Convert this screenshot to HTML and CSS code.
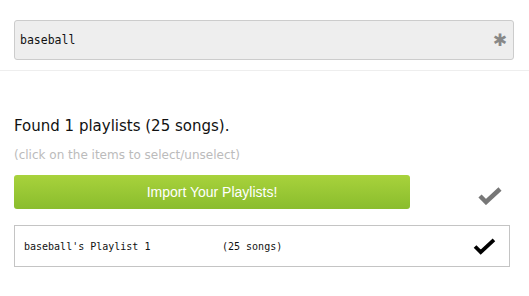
FILE: index.html
```html
<!DOCTYPE html>
<html lang="en">

<head>
  <meta charset="UTF-8" />
  <meta name="viewport" content="width=device-width, initial-scale=1.0" />
  <title>Playlist import</title>
  <link rel="stylesheet" href="styles.css">
</head>

<body>
  <div class="search-bar">
    <div class="search-field">
      <span class="search-text">baseball</span>
      <span class="search-clear">&#x2731;</span>
    </div>
  </div>

  <div class="results">
    <p class="found">Found 1 playlists (25 songs).</p>
    <p class="hint">(click on the items to select/unselect)</p>

    <div class="import-row">
      <button class="btn-import">Import Your Playlists!</button>
      <svg class="check check-all" viewBox="0 0 24 18">
        <path d="M2 9l6 6L22 2" fill="none" stroke="currentColor" stroke-width="4.5"></path>
      </svg>
    </div>

    <div class="playlist">
      <span class="playlist-name">baseball's Playlist 1</span>
      <span class="playlist-count">(25 songs)</span>
      <svg class="check check-item" viewBox="0 0 24 18">
        <path d="M2 9l6 6L22 2" fill="none" stroke="currentColor" stroke-width="4"></path>
      </svg>
    </div>
  </div>
</body>

</html>
```

FILE: styles.css
```css
* {
  box-sizing: border-box;
  margin: 0;
  padding: 0;
}

body {
  font-family: "DejaVu Sans", Verdana, sans-serif;
  background: #ffffff;
  color: #111111;
  width: 529px;
}

.search-bar {
  padding: 20px 15px 10px 14px;
  border-bottom: 1px solid #eeeeee;
}

.search-field {
  display: flex;
  align-items: center;
  justify-content: space-between;
  height: 40px;
  padding: 0 6px 0 5px;
  background: #eeeeee;
  border: 1px solid #cccccc;
  border-radius: 3px;
}

.search-text {
  font-family: "DejaVu Sans Mono", monospace;
  font-size: 11.5px;
  color: #111111;
}

.search-clear {
  font-family: "DejaVu Sans", sans-serif;
  font-size: 17px;
  font-weight: bold;
  color: #888888;
}

.results {
  padding: 46px 20px 0 14px;
}

.found {
  font-size: 15px;
  line-height: 18px;
}

.hint {
  margin-top: 13px;
  font-size: 12px;
  line-height: 15px;
  color: #bbbbbb;
}

.import-row {
  display: flex;
  align-items: center;
  margin-top: 12px;
}

.btn-import {
  width: 396px;
  height: 34px;
  border: none;
  border-radius: 3px;
  background: linear-gradient(#a8d23c, #8abd2d);
  color: #ffffff;
  font-family: "Liberation Sans", Arial, sans-serif;
  font-size: 14px;
  cursor: pointer;
}

.check {
  display: block;
  margin-left: auto;
  margin-right: 7px;
}

.check-all {
  width: 24px;
  height: 18px;
  color: #777777;
  margin-top: 8px;
}

.playlist {
  display: flex;
  align-items: center;
  margin-top: 16px;
  margin-right: -1px;
  height: 42px;
  padding: 0 10px 0 9px;
  border: 1px solid #c4c4c4;
  font-family: "DejaVu Sans Mono", monospace;
  font-size: 10px;
  color: #111111;
}

.playlist-name {
  width: 198px;
}

.check-item {
  width: 23px;
  height: 17px;
  color: #000000;
  margin-right: 3px;
}
```
